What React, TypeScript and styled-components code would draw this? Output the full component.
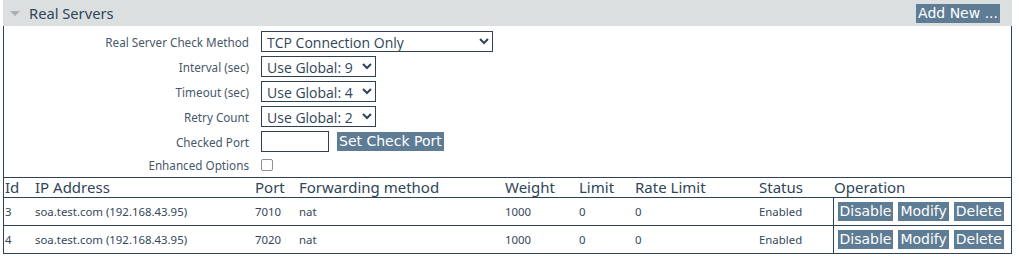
import React from "react";
import styled, { createGlobalStyle } from "styled-components";

const GlobalStyle = createGlobalStyle`
  body {
    margin: 0;
    background: #ffffff;
    font-family: "Noto Sans", "Open Sans", sans-serif;
    color: #34475a;
  }
`;

const Panel = styled.section`
  margin-left: 3px;
  width: 1009px;
  box-sizing: border-box;
  border: 1px solid #2d4256;
  border-top: none;
`;

const Header = styled.div`
  height: 26px;
  margin: 0 -1px;
  background: #dcdfe0;
  display: flex;
  align-items: center;
  padding: 0 12px 0 7px;
`;

const Caret = styled.span`
  width: 0;
  height: 0;
  border-left: 5px solid transparent;
  border-right: 5px solid transparent;
  border-top: 5px solid #a9b0b5;
  margin-right: 9px;
  margin-top: 1px;
`;

const Title = styled.h2`
  margin: 0;
  font-size: 14.7px;
  font-weight: 400;
  color: #2f4558;
  flex: 1;
`;

const Button = styled.button`
  background: #5e7c94;
  color: #ffffff;
  border: none;
  border-radius: 0;
  font-family: "DejaVu Sans", sans-serif;
  font-size: 14px;
  line-height: 19px;
  height: 19px;
  padding: 0 2px;
  white-space: nowrap;
`;

const Form = styled.div`
  display: grid;
  grid-template-columns: 245px auto;
  column-gap: 12px;
  row-gap: 4px;
  padding: 5px 0 4px;
  align-items: center;
`;

const Label = styled.label`
  text-align: right;
  font-size: 11.7px;
  color: #465869;
`;

const Controls = styled.div<{ $h?: number }>`
  display: flex;
  align-items: center;
  gap: 8px;
  height: ${(p) => p.$h ?? 21}px;
`;

const Select = styled.select<{ $w: number }>`
  width: ${(p) => p.$w}px;
  height: 21px;
  border: 1px solid #2d4256;
  border-radius: 0;
  background: #ffffff;
  color: #2f4558;
  font-family: "Open Sans", "Noto Sans", sans-serif;
  font-size: 14px;
  padding: 0 1px;
`;

const TextInput = styled.input`
  width: 68px;
  height: 21px;
  box-sizing: border-box;
  border: 1px solid #2d4256;
  border-radius: 0;
  margin: 0;
`;

const Check = styled.span`
  width: 10px;
  height: 10px;
  border: 1.5px solid #8f8c9c;
  border-radius: 2px;
  background: #ffffff;
`;

const Table = styled.table`
  width: 100%;
  table-layout: fixed;
  border-collapse: collapse;
  border-top: 1px solid #2d4256;
`;

const Th = styled.th`
  text-align: left;
  font-weight: 400;
  font-size: 15px;
  line-height: 19px;
  color: #2f4558;
  padding: 0 1px;
  height: 19px;
  border-bottom: 1px solid #2d4256;
  white-space: nowrap;
`;

const Td = styled.td<{ $ops?: boolean }>`
  font-size: 11.4px;
  line-height: 14px;
  color: #34475a;
  padding: ${(p) => (p.$ops ? "0 0 0 4px" : "0 1px")};
  height: 27px;
  white-space: nowrap;
  border-left: ${(p) => (p.$ops ? "1px solid #2d4256" : "none")};
`;

const Row = styled.tr`
  & + & td {
    border-top: 1px solid #2d4256;
  }
`;

const Ops = styled.div`
  display: flex;
  gap: 5px;
`;

const columns = [
  { name: "Id", w: 30 },
  { name: "IP Address", w: 220 },
  { name: "Port", w: 44 },
  { name: "Forwarding method", w: 206 },
  { name: "Weight", w: 74 },
  { name: "Limit", w: 56 },
  { name: "Rate Limit", w: 124 },
  { name: "Status", w: 75 },
  { name: "Operation", w: 178 },
];

const servers = [
  { id: 3, ip: "soa.test.com (192.168.43.95)", port: 7010 },
  { id: 4, ip: "soa.test.com (192.168.43.95)", port: 7020 },
];

export default function App() {
  return (
    <>
      <GlobalStyle />
      <Panel>
        <Header>
          <Caret />
          <Title>Real Servers</Title>
          <Button>Add New ...</Button>
        </Header>
        <Form>
          <Label>Real Server Check Method</Label>
          <Controls>
            <Select $w={232} defaultValue="tcp">
              <option value="tcp">TCP Connection Only</option>
            </Select>
          </Controls>
          <Label>Interval (sec)</Label>
          <Controls>
            <Select $w={115}>
              <option>Use Global: 9</option>
            </Select>
          </Controls>
          <Label>Timeout (sec)</Label>
          <Controls>
            <Select $w={115}>
              <option>Use Global: 4</option>
            </Select>
          </Controls>
          <Label>Retry Count</Label>
          <Controls>
            <Select $w={115}>
              <option>Use Global: 2</option>
            </Select>
          </Controls>
          <Label>Checked Port</Label>
          <Controls>
            <TextInput type="text" />
            <Button>Set Check Port</Button>
          </Controls>
          <Label>Enhanced Options</Label>
          <Controls $h={17}>
            <Check />
          </Controls>
        </Form>
        <Table>
          <colgroup>
            {columns.map((c) => (
              <col key={c.name} style={{ width: c.w }} />
            ))}
          </colgroup>
          <thead>
            <tr>
              {columns.map((c) => (
                <Th key={c.name}>{c.name}</Th>
              ))}
            </tr>
          </thead>
          <tbody>
            {servers.map((s) => (
              <Row key={s.id}>
                <Td>{s.id}</Td>
                <Td>{s.ip}</Td>
                <Td>{s.port}</Td>
                <Td>nat</Td>
                <Td>1000</Td>
                <Td>0</Td>
                <Td>0</Td>
                <Td>Enabled</Td>
                <Td $ops>
                  <Ops>
                    <Button>Disable</Button>
                    <Button>Modify</Button>
                    <Button>Delete</Button>
                  </Ops>
                </Td>
              </Row>
            ))}
          </tbody>
        </Table>
      </Panel>
    </>
  );
}
